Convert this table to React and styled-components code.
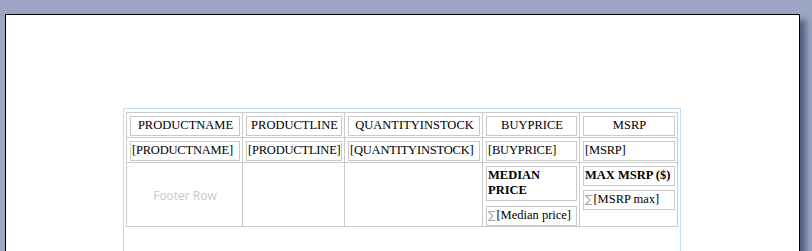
import React from 'react';
import styled, { createGlobalStyle } from 'styled-components';

const GlobalStyle = createGlobalStyle`
  html, body {
    margin: 0;
    padding: 0;
  }
  body {
    background: #9ca6c4;
    height: 251px;
    overflow: hidden;
    font-family: "Liberation Serif", "Times New Roman", serif;
  }
`;

const Workspace = styled.div`
  box-sizing: border-box;
  height: 251px;
  overflow: hidden;
  padding: 14px 0 0 5px;
`;

const Page = styled.div`
  box-sizing: border-box;
  width: 795px;
  height: 420px;
  background: #ffffff;
  border: 1px solid #000000;
  box-shadow: 7px 5px 6px -1px rgba(38, 46, 78, 0.6);
  padding: 93px 0 0 117px;
`;

const ReportFrame = styled.div`
  box-sizing: border-box;
  width: 558px;
  height: 260px;
  border: 1px solid #c4dcee;
  padding: 3px 2px 0 2px;
`;

const Grid = styled.div`
  display: grid;
  grid-template-columns: 116px 102px 138px 97px 98px;
  grid-template-rows: 25px 25px 64px;
  width: 552px;
  box-sizing: border-box;
  border-top: 1px solid #cbcbcb;
  border-left: 1px solid #cbcbcb;
`;

const Cell = styled.div`
  box-sizing: border-box;
  border-right: 1px solid #cbcbcb;
  border-bottom: 1px solid #cbcbcb;
  padding: 3px 2px 0 3px;
  display: flex;
  flex-direction: column;
  gap: ${(p) => p.$gap || 0}px;
  justify-content: ${(p) => (p.$centered ? 'center' : 'flex-start')};
  align-items: ${(p) => (p.$centered ? 'center' : 'stretch')};
`;

const Field = styled.div`
  box-sizing: border-box;
  border: 1px solid #c9c9c9;
  padding: 1px 0 2px 1px;
  font-size: 12.5px;
  line-height: 15px;
  color: #000000;
  white-space: ${(p) => (p.$wrap ? 'normal' : 'nowrap')};
  text-align: ${(p) => (p.$align === 'center' ? 'center' : 'left')};
  font-weight: ${(p) => (p.$bold ? 700 : 400)};
  letter-spacing: ${(p) => (p.$tight ? '-0.2px' : '0')};
`;

const Sigma = styled.span`
  color: #a6a6a6;
  font-family: "DejaVu Sans", sans-serif;
  font-size: 11px;
  margin-right: 1px;
`;

const Placeholder = styled.span`
  font-family: "Open Sans", "Noto Sans", sans-serif;
  font-size: 12px;
  color: #c8c8c8;
  margin-bottom: 2px;
`;

const columns = ['PRODUCTNAME', 'PRODUCTLINE', 'QUANTITYINSTOCK', 'BUYPRICE', 'MSRP'];

export default function App() {
  return (
    <>
      <GlobalStyle />
      <Workspace>
        <Page>
          <ReportFrame>
            <Grid>
              {columns.map((c) => (
                <Cell key={`h-${c}`}>
                  <Field $align="center">{c}</Field>
                </Cell>
              ))}
              {columns.map((c) => (
                <Cell key={`d-${c}`}>
                  <Field $tight>[{c}]</Field>
                </Cell>
              ))}
              <Cell $centered>
                <Placeholder>Footer Row</Placeholder>
              </Cell>
              <Cell />
              <Cell />
              <Cell $gap={5}>
                <Field $bold $wrap>MEDIAN PRICE</Field>
                <Field>
                  <Sigma>∑</Sigma>[Median price]
                </Field>
              </Cell>
              <Cell $gap={4}>
                <Field $bold>MAX MSRP ($)</Field>
                <Field>
                  <Sigma>∑</Sigma>[MSRP max]
                </Field>
              </Cell>
            </Grid>
          </ReportFrame>
        </Page>
      </Workspace>
    </>
  );
}
